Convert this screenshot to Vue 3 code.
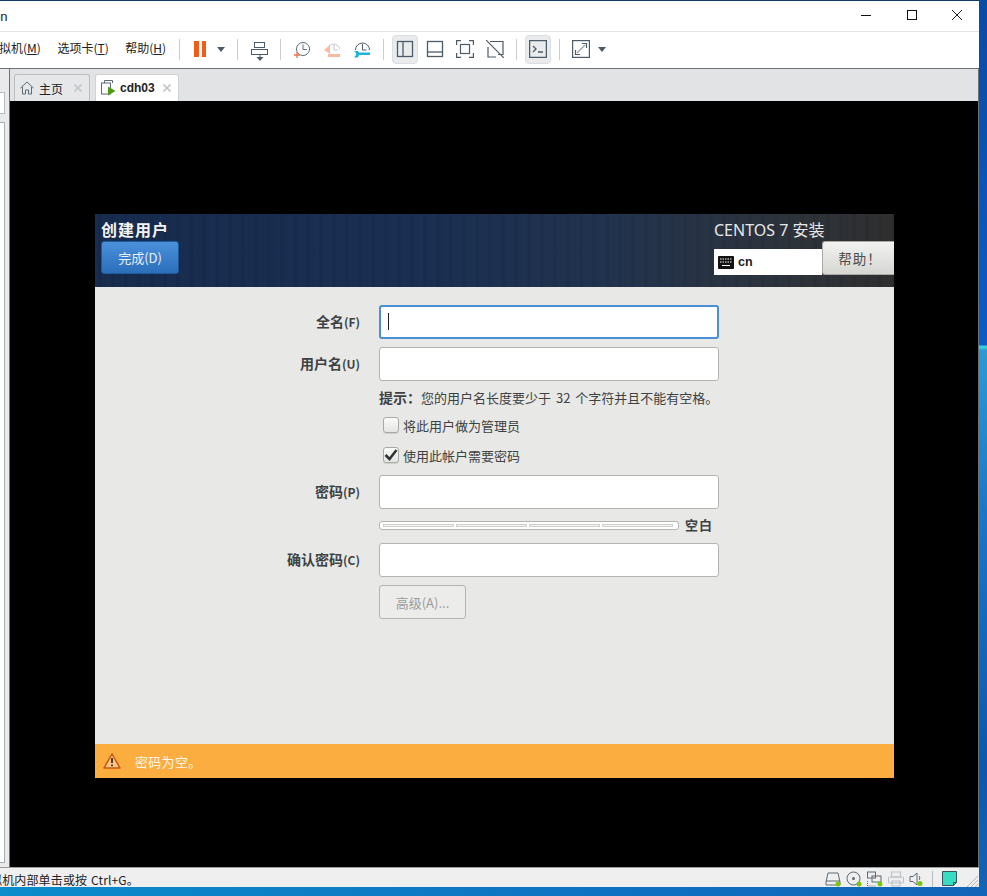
<script setup>
const fields = [
  { cn: '全名', key: '(F)', focus: true },
  { cn: '用户名', key: '(U)' },
]
</script>

<template>
  <div class="desktop">
    <div class="window">
      <div class="titlebar">
        <span class="title">on</span>
        <div class="winbtns">
          <svg width="12" height="12" viewBox="0 0 12 12"><path d="M1 6.500h10" stroke="#111" fill="none"/></svg>
          <svg width="12" height="12" viewBox="0 0 12 12"><rect x="1.500" y="1.500" width="9" height="9" stroke="#111" fill="none"/></svg>
          <svg width="12" height="12" viewBox="0 0 12 12"><path d="M1 1l10 10M11 1L1 11" stroke="#222" fill="none"/></svg>
        </div>
      </div>
      <div class="toolbar">
        <div class="menus">
          <span class="menu">拟机(<u>M</u>)</span>
          <span class="menu">选项卡(<u>T</u>)</span>
          <span class="menu">帮助(<u>H</u>)</span>
        </div>
        <i class="sep s1"></i>
        <div class="pause"><b></b><b></b></div>
        <i class="caret"></i>
        <i class="sep s2"></i>
        <svg class="ic send" width="20" height="20" viewBox="0 0 20 20"><g fill="none" stroke="#4b5c68"><rect x="4.500" y="1.500" width="10" height="5"/><rect x="1.500" y="8.500" width="16" height="5"/></g><path d="M10 14v3" stroke="#4b5c68"/><path d="M6.500 16h7L10 20z" fill="#4b5c68"/></svg>
        <i class="sep s3"></i>
        <svg class="ic clock" width="20" height="20" viewBox="0 0 20 20"><circle cx="10" cy="9" r="6.500" fill="none" stroke="#5e6d78"/><path d="M10 4.500V9.500h4" fill="none" stroke="#5e6d78"/><path d="M1 15h6M4 12v6" stroke="#f0714a" stroke-width="1.300"/></svg>
        <svg class="ic revert" width="20" height="20" viewBox="0 0 20 20"><path d="M5 6a6.500 6.500 0 0 1 11 3" fill="none" stroke="#c4cbd0"/><path d="M10 4.500V10h4" fill="none" stroke="#c4cbd0"/><path d="M0 10l6-5v9z" fill="#fbb99f"/><rect x="4" y="14" width="12" height="3" fill="#fbb99f"/></svg>
        <svg class="ic manage" width="20" height="20" viewBox="0 0 20 20"><path d="M2.500 10a7 7 0 1 1 14 0" fill="none" stroke="#4b5c68"/><path d="M9.500 4v6h4" fill="none" stroke="#4b5c68"/><path d="M1 11h4l1 1.500h11v2.500H6l-1 2.500H1l2-2.500V13z" fill="#1bb6d8"/></svg>
        <i class="sep s4"></i>
        <div class="tool on t1"><svg width="18" height="18" viewBox="0 0 18 18"><g fill="none" stroke="#4b5c68" stroke-width="1.300"><rect x="1.500" y="1.500" width="15" height="15"/><path d="M7 1.500v15"/></g></svg></div>
        <div class="tool"><svg width="18" height="18" viewBox="0 0 18 18"><g fill="none" stroke="#4b5c68" stroke-width="1.300"><rect x="1.500" y="1.500" width="15" height="15"/><path d="M1.500 12h15"/></g></svg></div>
        <div class="tool"><svg width="18" height="18" viewBox="0 0 18 18"><g fill="none" stroke="#4b5c68" stroke-width="1.200"><path d="M.6 5V.6H5M13 .6h4.400V5M.6 13v4.400H5M13 17.400h4.400V13"/><rect x="4.500" y="4.500" width="9" height="9"/></g></svg></div>
        <div class="tool"><svg width="18" height="18" viewBox="0 0 18 18"><g fill="none" stroke="#4b5c68" stroke-width="1.200"><path d="M4 1.500h13v13h-5M2 7v10h8"/><path d="M0 0l18 18"/></g></svg></div>
        <i class="sep s5"></i>
        <div class="tool on t2"><svg width="18" height="18" viewBox="0 0 18 18"><g fill="none" stroke="#4b5c68" stroke-width="1.300"><rect x=".6" y=".6" width="16.800" height="16.800"/><path d="M4 6l3 3-3 3M9 12h5"/></g></svg></div>
        <i class="sep s6"></i>
        <svg class="ic full" width="18" height="18" viewBox="0 0 18 18"><g fill="none" stroke="#4b5c68" stroke-width="1.200"><rect x=".6" y=".6" width="16.800" height="16.800"/><path d="M10 3.500h4.500V8M3.500 10v4.500H8"/><path d="M5 13l8-8" stroke="#9aa4ab"/></g></svg>
        <i class="caret c2"></i>
      </div>
      <div class="body">
        <div class="side"><div class="side-top"></div><div class="side-list"></div></div>
        <div class="main">
          <div class="tabs">
            <div class="tab">
              <svg width="14" height="14" viewBox="0 0 14 14"><path d="M.5 7L7 1l6.500 6M2.500 6v7h3V9h3v4h3V6" fill="none" stroke="#5c6a74"/></svg>
              <span>主页</span>
              <svg class="x" width="8" height="8" viewBox="0 0 8 8"><path d="M.5.5l7 7M7.500.5l-7 7" stroke="#c4c7ca" stroke-width="1.700"/></svg>
            </div>
            <div class="tab active">
              <svg width="15" height="16" viewBox="0 0 15 16"><g fill="none" stroke="#5c6a74"><path d="M3.500 3V.5h8V3"/><rect x=".5" y="3" width="9" height="11"/></g><path d="M7 6.500l7.500 4.500L7 15.500z" fill="#4c9a16"/></svg>
              <strong>cdh03</strong>
              <svg class="x" width="8" height="8" viewBox="0 0 8 8"><path d="M.5.5l7 7M7.500.5l-7 7" stroke="#c4c7ca" stroke-width="1.700"/></svg>
            </div>
          </div>
          <div class="screen">
            <div class="installer">
              <header class="hdr">
                <div class="hdr-left">
                  <div class="spoke">创建用户</div>
                  <div class="done">完成(D)</div>
                </div>
                <div class="hdr-right">
                  <div class="product">CENTOS 7 安装</div>
                  <div class="kbrow">
                    <div class="kb">
                      <svg width="16" height="13" viewBox="0 0 16 13"><rect width="16" height="13" rx="1" fill="#111"/><path d="M2 3h12M2 6h12" stroke="#fff" stroke-dasharray="1.500 1"/><path d="M4 9.500h8" stroke="#fff"/></svg>
                      <b>cn</b>
                    </div>
                    <div class="help">帮助！</div>
                  </div>
                </div>
              </header>
              <div class="content">
                <div class="form">
                  <template v-for="f in fields" :key="f.cn">
                    <label class="lbl">{{ f.cn }}<small>{{ f.key }}</small></label>
                    <div class="inp" :class="{ focus: f.focus }"><i v-if="f.focus" class="cursor"></i></div>
                  </template>
                  <div class="hint c2col"><b>提示：</b>您的用户名长度要少于 32 个字符并且不能有空格。</div>
                  <div class="chk c2col"><span class="box"></span>将此用户做为管理员</div>
                  <div class="chk c2col second">
                    <span class="box"><svg width="14" height="12" viewBox="0 0 14 12"><path d="M1.500 6l4 4 7-9" fill="none" stroke="#2e3436" stroke-width="2.500"/></svg></span>使用此帐户需要密码
                  </div>
                  <label class="lbl">密码<small>(P)</small></label>
                  <div class="inp"></div>
                  <div class="meter-row c2col">
                    <div class="meter"><i></i><i></i><i></i><i></i></div>
                    <b>空白</b>
                  </div>
                  <label class="lbl">确认密码<small>(C)</small></label>
                  <div class="inp"></div>
                  <div class="adv c2col">高级(A)...</div>
                </div>
              </div>
              <footer class="warn">
                <svg width="18" height="16" viewBox="0 0 18 16"><path d="M9 1L17 15H1z" fill="#f9c78b" stroke="#c7580e" stroke-width="1.500" stroke-linejoin="round"/><path d="M9 5v5" stroke="#5a3a1a" stroke-width="2"/><path d="M9 11.500v1.800" stroke="#5a3a1a" stroke-width="2"/></svg>
                <span>密码为空。</span>
              </footer>
            </div>
          </div>
        </div>
      </div>
      <div class="status">
        <span class="msg">拟机内部单击或按 Ctrl+G。</span>
        <div class="tray">
          <svg width="16" height="16" viewBox="0 0 16 16"><path d="M3 2h10l2 9v3H1v-3zM1 10h14" fill="none" stroke="#5c6a74"/><circle cx="13" cy="13" r="2.500" fill="#7ac70c"/></svg>
          <svg width="16" height="16" viewBox="0 0 16 16"><circle cx="7.500" cy="7.500" r="6.500" fill="none" stroke="#5c6a74"/><circle cx="7.500" cy="7.500" r="1.500" fill="#5c6a74"/><circle cx="13" cy="13" r="2.500" fill="#7ac70c"/></svg>
          <svg width="16" height="16" viewBox="0 0 16 16"><g fill="none" stroke="#5c6a74"><rect x=".5" y="1" width="8" height="6"/><rect x="5" y="5" width="9" height="6"/><path d="M.5 10v5h9" stroke-dasharray="1 1"/></g><circle cx="13" cy="13" r="2.500" fill="#7ac70c"/></svg>
          <svg width="16" height="16" viewBox="0 0 16 16"><g fill="none" stroke="#b9c0c5"><rect x="3.500" y="1" width="9" height="5"/><rect x=".5" y="6" width="15" height="6" rx="1"/><rect x="4" y="10" width="8" height="5"/></g></svg>
          <svg width="16" height="16" viewBox="0 0 16 16"><path d="M1 5.500h3L8 2v12L4 10.500H1z" fill="none" stroke="#5c6a74"/><path d="M10 5c1 1 1 3 0 4" fill="none" stroke="#5c6a74"/><circle cx="11" cy="12.500" r="2.500" fill="#7ac70c"/></svg>
          <i class="tray-sep"></i>
          <svg width="16" height="16" viewBox="0 0 16 16"><path d="M.5.500h14v11l-3 3h-11z" fill="#38dcc0" stroke="#3c5460"/><path d="M14.500 11.500h-3v3" fill="none" stroke="#3c5460"/></svg>
          <svg class="grip" width="11" height="11" viewBox="0 0 11 11"><path d="M0 11L11 0M4 11l7-7M8 11l3-3" stroke="#b4b8bb"/></svg>
        </div>
      </div>
    </div>
  </div>
</template>

<style>
html, body { margin: 0; background: #0d57a8; }
</style>

<style scoped>
.desktop {
  width: 987px; height: 896px; overflow: hidden;
  background:
    linear-gradient(90deg, #0b8ccb, #0e72c2 60%, #1264b8) bottom / 100% 9px no-repeat,
    linear-gradient(#0a4aa8 0, #0b5cc8 345px, #35d0e0 346px, #35d0e0 348px, #2b9ad6 350px, #1976c8 520px, #0b58ae 770px, #1464b8 896px);
  font-family: "Noto Sans CJK SC", "Liberation Sans", sans-serif;
  color: #222;
}
.window {
  width: 979px; height: 886px; margin-top: 1px; background: #fff;
  display: flex; flex-direction: column; box-shadow: 0 -1px 0 #12395f;
}
.titlebar { height: 30px; flex: none; display: flex; align-items: center; justify-content: space-between; border-bottom: 1px solid #e3e3e3; }
.title { font: 13px "Liberation Sans", sans-serif; margin-left: -7px; margin-top: 1px; color: #222; }
.winbtns { display: flex; gap: 33.500px; margin-right: 7px; margin-top: -2px; width: 112px; }
.toolbar { height: 36px; flex: none; display: flex; align-items: center; }
.menus { display: flex; font: 12px "Noto Sans CJK SC", sans-serif; color: #222; margin-left: -1px; width: 180px; margin-top: -5px; flex: none; }
.menu { margin-right: 16.500px; white-space: nowrap; }
.sep { width: 1px; height: 21px; background: #c9cbcd; flex: none; margin-top: -2px; }
.pause { display: flex; gap: 3px; margin: -2px 0 0 14px; flex: none; }
.pause b { width: 4.500px; height: 16px; background: #f25c19; display: block; }
.caret { width: 0; height: 0; border: 4px solid transparent; border-top: 5px solid #4b5c68; border-bottom: 0; margin: -2px 0 0 11px; flex: none; }
.s2 { margin-left: 12px; }
.send { margin: 0 0 -1px 12px; }
.s3 { margin-left: 10px; }
.clock { margin: 0 0 0 12px; }
.revert { margin: -1px 0 0 11px; }
.manage { margin: -1px 0 0 9px; }
.s4 { margin-left: 10px; }
.tool { width: 26px; height: 29px; display: flex; align-items: center; justify-content: center; margin: -2px 0 0 4px; border-radius: 4px; border: 1px solid transparent; flex: none; box-sizing: border-box; }
.tool.on { background: #e9ebed; border-color: #dcdee0; }
.t1 { margin-left: 8px; }
.t2 { margin-left: 8px; }
.s5 { margin-left: 8px; }
.s6 { margin-left: 8px; }
.ic { flex: none; }
.full { margin: -2px 0 0 12px; }
.c2 { margin-left: 8px; }
.body { flex: 1; display: flex; min-height: 0; border-top: 1px solid #6d7174; }
.side { width: 9px; flex: none; background: #e9eaec; padding-top: 23px; }
.side-top { width: 4px; height: 20px; background: #fff; border: 1px solid #b9bcbf; border-left: 0; }
.side-list { width: 4px; height: 739px; background: #fff; border: 1px solid #a9adb1; border-left: 0; margin-top: 8px; }
.main { flex: 1; display: flex; flex-direction: column; border-left: 1px solid #6d7174; border-right: 1px solid #6d7174; min-width: 0; }
.tabs { height: 32px; flex: none; background: #e2e3e5; display: flex; align-items: flex-end; padding-left: 4px; gap: 5px; }
.tab {
  height: 27px; width: 76px; box-sizing: border-box; border: 1px solid #bcbec0; border-bottom: 0; border-radius: 3px 3px 0 0;
  background: #e6e7e9; display: flex; align-items: center; padding-left: 5px; gap: 5px; font-size: 12px; color: #222; flex: none;
}
.tab.active { background: #fff; width: 84px; gap: 4px; border-color: #d0d2d4; }
.tab strong { font: 700 12px "Liberation Sans", sans-serif; }
.tab .x { margin-left: auto; margin-right: 7px; flex: none; }
.screen { flex: 1; background: #000; padding: 113px 84px 0 85px; min-height: 0; }
.installer { width: 799px; height: 564px; display: flex; flex-direction: column; background: #e8e8e7; }
.hdr {
  height: 73px; flex: none; display: flex; justify-content: space-between;
  background:
    repeating-linear-gradient(90deg, rgba(255,255,255,.012) 0 3px, rgba(0,0,0,.02) 3px 7px, rgba(255,255,255,.008) 7px 13px),
    linear-gradient(90deg, #162a4c 0%, #182d50 40%, #20314c 65%, #2c3138 88%, #2d2d2d 100%);
}
.hdr-left { padding: 5px 0 0 6px; }
.spoke { font-size: 16px; font-weight: 700; color: #f3f3f3; line-height: 20px; letter-spacing: 1px; }
.done {
  width: 78px; height: 33px; margin-top: 2px; border: 1px solid #1c5a9b; border-radius: 3px; box-sizing: border-box;
  background: linear-gradient(#4b90da, #2b6fba); color: #e9f0f8; font-size: 13px; text-align: center; line-height: 32px;
}
.hdr-right { width: 180px; padding-top: 6px; }
.product { font: 16px "Noto Sans", "Noto Sans CJK SC", sans-serif; color: #e6e7e8; line-height: 21px; white-space: nowrap; }
.kbrow { display: flex; align-items: flex-end; height: 34px; }
.kb { width: 108px; height: 26px; background: #fff; display: flex; align-items: center; padding-left: 4px; gap: 4px; box-sizing: border-box; }
.kb b { font: 700 12.500px "Liberation Sans", sans-serif; color: #222; }
.help {
  width: 72px; height: 34px; border: 1px solid #a9a9a6; border-right: 0; border-radius: 3px 0 0 3px; box-sizing: border-box;
  background: linear-gradient(#f2f2f0, #d6d6d3); color: #4a4d4e; font-size: 13.500px; text-align: center; line-height: 32px; letter-spacing: 1px; padding-left: 3px;
}
.content { flex: 1; min-height: 0; padding: 18px 0 0 0; }
.form { display: grid; grid-template-columns: 265px 340px; column-gap: 19px; }
.lbl { text-align: right; font-size: 14px; font-weight: 700; color: #3d4243; line-height: 32px; height: 34px; }
.lbl small { font-size: 12px; }
.inp { height: 34px; box-sizing: border-box; background: #fff; border: 1px solid #b4b4b1; border-radius: 3px; margin-bottom: 8px; position: relative; }
.inp.focus { border: 2px solid #4a90d9; }
.cursor { position: absolute; left: 7px; top: 6px; width: 1px; height: 17px; background: #222; }
.c2col { grid-column: 2; }
.hint { font-size: 13px; color: #3d4243; line-height: 16px; white-space: nowrap; word-spacing: 2px; height: 18px; }
.hint b { font-size: 14px; }
.chk { display: flex; align-items: center; font-size: 13px; color: #3d4243; margin: 8px 0 0 4px; height: 20px; }
.chk.second { margin: 10px 0 10px 4px; }
.box {
  width: 16px; height: 16px; box-sizing: border-box; border: 1px solid #a9a9a6; border-radius: 3px; margin-right: 4px; flex: none;
  background: linear-gradient(#fbfbfa, #e4e4e2); box-shadow: 0 1px 0 #d0d0ce; display: flex; align-items: center; justify-content: center;
}
.meter-row { display: flex; align-items: center; margin: 4px 0 13px; height: 9px; font-size: 13px; color: #3d4243; }
.meter { width: 300px; height: 9px; box-sizing: border-box; background: #fff; border: 1px solid #b4b4b1; border-radius: 3px; display: flex; gap: 2px; padding: 2px 5px 2px 3px; margin-right: 6px; flex: none; }
.meter i { flex: 1; height: 3px; box-sizing: border-box; background: #f4f4f3; border: 1px solid #cfcfcc; }
.meter-row b { font-weight: 700; letter-spacing: 1px; white-space: nowrap; margin-top: -2px; }
.adv {
  width: 87px; height: 34px; box-sizing: border-box; border: 1px solid #b4b4b1; border-radius: 3px; background: #ececeb;
  color: #9a9c9c; font-size: 13px; text-align: center; line-height: 33px;
}
.warn { height: 34px; flex: none; background: #fcad3f; display: flex; align-items: center; color: #fdf6ea; font-size: 13px; padding-left: 8px; box-sizing: border-box; }
.warn span { margin-left: 14px; letter-spacing: .3px; }
.status { height: 20px; flex: none; box-sizing: border-box; background: #efeff0; border-top: 1px solid #9a9da0; display: flex; justify-content: space-between; align-items: center; overflow: hidden; }
.msg { font-size: 12px; color: #222; margin-left: -10px; white-space: nowrap; margin-top: 3px; word-spacing: 1px; letter-spacing: .15px; }
.tray { display: flex; align-items: center; gap: 5px; margin-right: 1px; margin-top: 2px; }
.tray-sep { width: 1px; height: 16px; background: #b9bcbf; margin: 0 4px 0 2px; }
.grip { margin-left: 4px; align-self: flex-end; }
</style>
